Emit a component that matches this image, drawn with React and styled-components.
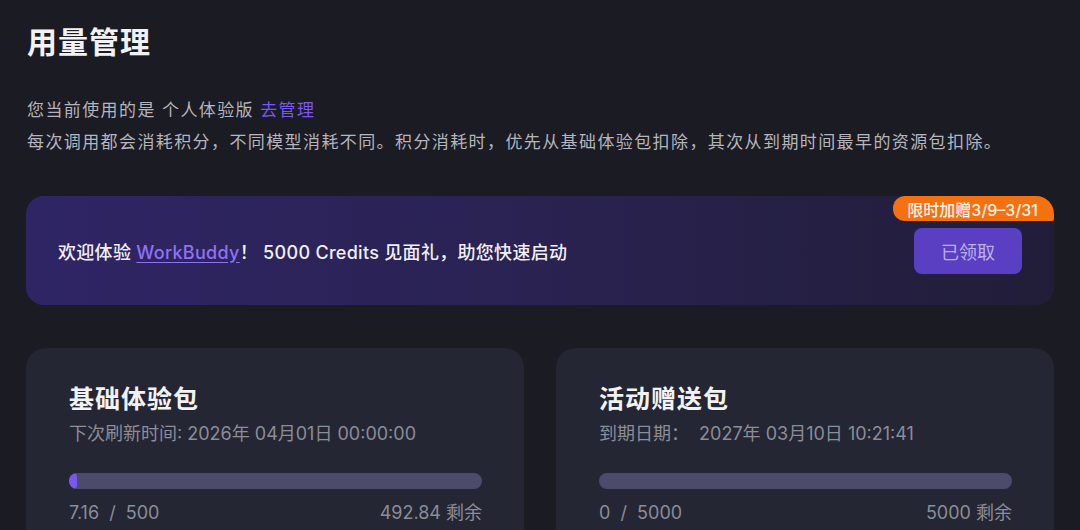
import React from 'react';
import styled, { createGlobalStyle } from 'styled-components';

const colors = {
  page: '#1b1b24',
  text: '#f2f2f5',
  muted: '#b4b5bd',
  dim: '#8b8d98',
  accent: '#7857f2',
  card: '#242633',
  track: '#4d4b6c',
  orange: '#f5700f',
};

const GlobalStyle = createGlobalStyle`
  html, body {
    margin: 0;
    padding: 0;
    background: ${colors.page};
  }
  body {
    font-family: Inter, "Noto Sans CJK SC", "Noto Sans", sans-serif;
    color: ${colors.text};
    -webkit-font-smoothing: antialiased;
  }
`;

const Page = styled.main`
  width: 1080px;
  height: 530px;
  box-sizing: border-box;
  padding: 22px 26px 0;
  overflow: hidden;
  background: ${colors.page};
`;

const Title = styled.h1`
  margin: 0 0 0 1px;
  font-size: 30px;
  line-height: 40px;
  font-weight: 700;
  letter-spacing: 1px;
  color: ${colors.text};
`;

const Intro = styled.div`
  margin-top: 32px;
  padding-left: 1px;
  font-size: 17px;
  line-height: 32px;
  letter-spacing: 1.4px;
  color: ${colors.muted};
`;

const Link = styled.a`
  color: ${colors.accent};
  text-decoration: none;
`;

const Banner = styled.section`
  position: relative;
  margin-top: 38px;
  height: 109px;
  display: flex;
  align-items: center;
  justify-content: space-between;
  padding: 0 32px;
  border-radius: 18px;
  background: linear-gradient(90deg, #2f2566 0%, #29224f 55%, #211d38 100%);
`;

const BannerText = styled.p`
  margin: 0;
  font-size: 18px;
  font-weight: 500;
  letter-spacing: 0.3px;
  color: #f0eff8;
`;

const Brand = styled.a`
  color: #8e72f5;
  text-decoration: underline;
  text-underline-offset: 3px;
`;

const Badge = styled.span`
  position: absolute;
  top: 0;
  right: 0;
  height: 25px;
  padding: 0 16px 0 14px;
  display: flex;
  align-items: center;
  font-size: 16px;
  font-weight: 500;
  color: #fff4ea;
  background: ${colors.orange};
  border-radius: 12px 18px 2px 12px;
`;

const ClaimButton = styled.button`
  width: 108px;
  height: 46px;
  border: none;
  border-radius: 8px;
  background: #5a3fc3;
  color: #bcb0ec;
  font-family: inherit;
  font-size: 18px;
`;

const Cards = styled.div`
  margin-top: 43px;
  display: grid;
  grid-template-columns: 1fr 1fr;
  gap: 32px;
`;

const Card = styled.article`
  height: 220px;
  padding: 31px 42px 0 43px;
  border-radius: 20px;
  background: ${colors.card};
`;

const CardTitle = styled.h2`
  margin: 0;
  font-size: 25px;
  line-height: 40px;
  font-weight: 700;
  letter-spacing: 1px;
  color: ${colors.text};
`;

const CardMeta = styled.div`
  margin-top: 2px;
  font-size: 18px;
  line-height: 26px;
  white-space: pre;
  color: ${colors.dim};
`;

const Track = styled.div`
  margin-top: 26px;
  height: 16px;
  border-radius: 8px;
  background: ${colors.track};
  overflow: hidden;
`;

const Fill = styled.div`
  height: 100%;
  border-radius: 8px;
  background: ${colors.accent};
`;

const Numbers = styled.div`
  margin-top: 11px;
  display: flex;
  justify-content: space-between;
  font-size: 18px;
  line-height: 26px;
  white-space: pre;
  color: ${colors.dim};
`;

const packs = [
  {
    name: '基础体验包',
    meta: '下次刷新时间: 2026年 04月01日 00:00:00',
    used: 7.16,
    total: 500,
    left: '492.84',
  },
  {
    name: '活动赠送包',
    meta: '到期日期：  2027年 03月10日 10:21:41',
    used: 0,
    total: 5000,
    left: '5000',
  },
];

function PackCard({ pack }) {
  const pct = (pack.used / pack.total) * 100;
  return (
    <Card>
      <CardTitle>{pack.name}</CardTitle>
      <CardMeta>{pack.meta}</CardMeta>
      <Track>
        {pct > 0 && <Fill style={{ width: `${Math.max(pct, 2)}%` }} />}
      </Track>
      <Numbers>
        <span>{`${pack.used}  /  ${pack.total}`}</span>
        <span>{pack.left} 剩余</span>
      </Numbers>
    </Card>
  );
}

export default function App() {
  return (
    <>
      <GlobalStyle />
      <Page>
        <Title>用量管理</Title>
        <Intro>
          <div>
            您当前使用的是 个人体验版 <Link href="#">去管理</Link>
          </div>
          <div>
            每次调用都会消耗积分，不同模型消耗不同。积分消耗时，优先从基础体验包扣除，其次从到期时间最早的资源包扣除。
          </div>
        </Intro>
        <Banner>
          <BannerText>
            欢迎体验 <Brand href="#">WorkBuddy</Brand>！ 5000 Credits 见面礼，助您快速启动
          </BannerText>
          <ClaimButton>已领取</ClaimButton>
          <Badge>限时加赠3/9–3/31</Badge>
        </Banner>
        <Cards>
          {packs.map((p) => (
            <PackCard key={p.name} pack={p} />
          ))}
        </Cards>
      </Page>
    </>
  );
}
